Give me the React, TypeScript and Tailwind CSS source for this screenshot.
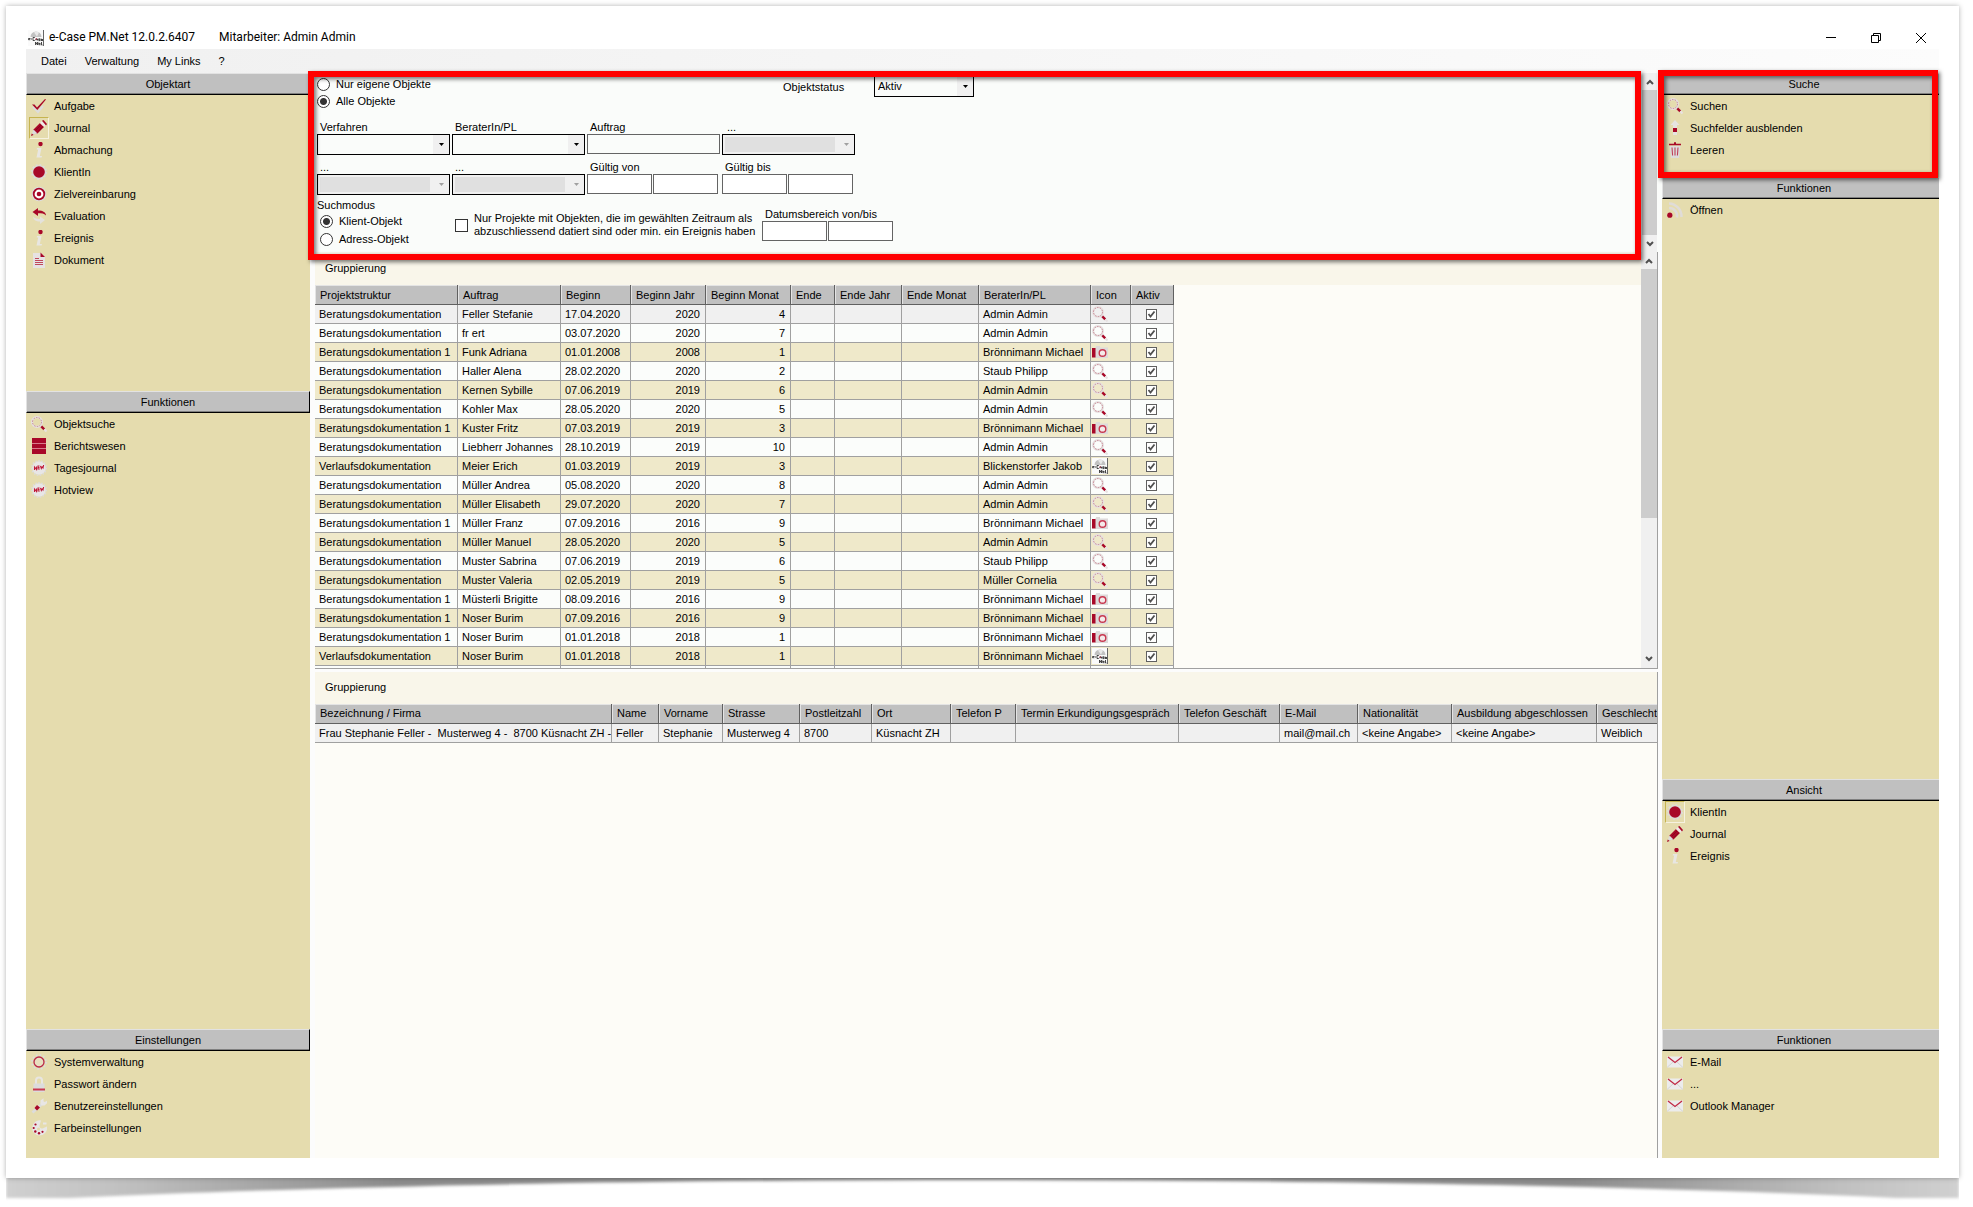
import React from "react";

type IconName =
  | "check" | "pencil" | "info" | "badge" | "target" | "reply" | "doc" | "search"
  | "books" | "new" | "gear" | "lock" | "wrench" | "palette" | "up" | "trash"
  | "feed" | "mail" | "camera" | "app";

const R = "#a80828";
const G = "#dcdcdc";

function Icon({ name }: { name: IconName }) {
  return (
    <svg width="16" height="16" viewBox="0 0 16 16" className="shrink-0" fill="none" aria-hidden="true">
      {name === "check" && (
        <>
          <path d="M2 9l5 5 5-6" stroke={G} strokeWidth="2" />
          <path d="M1 6.500h2.500L6 9.500l8-8.500 1 .6L6.300 12z" fill={R} />
        </>
      )}
      {name === "pencil" && (
        <>
          <path d="M2.500 9.500L9 3l4 4-6.500 6.500-4 .8z" fill={R} />
          <path d="M9 3l2-2 4 4-2 2z" fill="#f0e8e8" />
          <path d="M11 0.800l1.500-.8L16 4l-1 1.500z" fill={R} />
          <path d="M2.500 9.500l-1.500 4 1.500 1 4-1z" fill={G} />
          <path d="M0 16l.8-2.500 1.700 1.500z" fill={R} />
          <path d="M5 10l5-5M7 11.500l5-5" stroke="#7a0018" strokeWidth="0.600" />
        </>
      )}
      {name === "info" && (
        <>
          <circle cx="9.500" cy="2" r="2.200" fill={R} />
          <path d="M6 6h4.500L8.800 14H11l-.4 1.500H5.500L7.200 7.500H5.700z" fill="#e8e6e2" />
        </>
      )}
      {name === "badge" && (
        <>
          <circle cx="8" cy="8" r="6.800" fill={G} />
          <circle cx="8" cy="8" r="7.200" stroke={G} strokeWidth="1.600" strokeDasharray="1.800 2" />
          <circle cx="8" cy="8" r="5.800" fill={R} />
        </>
      )}
      {name === "target" && (
        <>
          <circle cx="8" cy="8" r="7.300" fill={G} />
          <circle cx="8" cy="8" r="5.300" fill="#fff" stroke={R} strokeWidth="1.800" />
          <circle cx="8" cy="8" r="2.300" fill={R} />
        </>
      )}
      {name === "reply" && (
        <>
          <path d="M7 0v2.500c5 0 8 2 8 5-2-2-4-2.200-8-2.200V8L1.500 4z" fill={R} />
          <path d="M2 8.500c0 3 3 5 7 5V16l5-4-5-3.500V11c-4 0-6-1-7-2.500z" fill="#e4e2dc" />
        </>
      )}
      {name === "doc" && (
        <>
          <path d="M2 1h8l4 4v11H2z" fill="#e6e2e2" />
          <path d="M9.500 0.500L14 5h-4.500z" fill={R} />
          <path d="M4 6.500h4M4 8.500h8M4 10.500h8M4 12.500h8" stroke="#c0485c" />
        </>
      )}
      {name === "search" && (
        <>
          <circle cx="6" cy="6" r="4.900" stroke="#e6e0e0" strokeWidth="2.200" />
          <circle cx="6" cy="6" r="4.500" stroke="#c88490" strokeDasharray="1.500 1.300" />
          <path d="M9.500 9.500l1 1" stroke="#ddd" strokeWidth="2" />
          <path d="M10.300 10.300l3 3" stroke={R} strokeWidth="2.400" />
          <path d="M13.300 13.300l2.200 2.200" stroke="#e8e2e2" strokeWidth="2.200" />
        </>
      )}
      {name === "books" && (
        <>
          <path d="M1 0h14v16H1z" fill={R} />
          <path d="M1 5.500h14M1 10.500h14" stroke="#d87a8a" />
        </>
      )}
      {name === "new" && (
        <>
          <circle cx="8" cy="8" r="6.800" fill="#e8e6e6" />
          <circle cx="8" cy="8" r="7.200" stroke={G} strokeWidth="1.500" strokeDasharray="1.500 1.500" />
          <path d="M3.500 10V7l2 2.500V6.500M8.500 6H7v3h1.800M7 7.500h1.500M9.500 5.800l.8 2.700.8-1.700.9 1.200.6-3" stroke="#c01838" strokeWidth="1.100" />
        </>
      )}
      {name === "gear" && (
        <>
          <circle cx="8" cy="8" r="7" stroke={G} strokeWidth="1.800" strokeDasharray="1.700 2" />
          <circle cx="8" cy="8" r="5" fill="#e8dfc0" stroke="#b8284a" strokeWidth="1.300" />
        </>
      )}
      {name === "lock" && (
        <>
          <path d="M5 8V4.500a3 3 0 016 0V8" stroke="#e8e6e2" strokeWidth="2" />
          <path d="M2.500 7.500h11V16h-11z" fill={G} />
          <path d="M2 12.500h12v2H2z" fill="#c83850" />
        </>
      )}
      {name === "wrench" && (
        <>
          <path d="M1.500 14.500L12 5" stroke={G} strokeWidth="2.800" />
          <path d="M9.500 6V2.500L12.500.2v3l1.300.9L16 2.800v2.400L13.500 7.500h-3z" fill="#e8e6e4" />
          <path d="M6 7l3 2.500-3 3-2.500-2.500z" fill={R} />
        </>
      )}
      {name === "palette" && (
        <>
          <path d="M10 .5L8.500 5.500a2.500 2.500 0 003 3L16 6.500a7.500 7.500 0 11-6-6z" fill="#e8e6e6" />
          <path d="M12 3.500h3.500" stroke="#e8e6e6" strokeWidth="2" />
          <g fill={R}>
            <circle cx="4.500" cy="4.500" r="1.100" />
            <circle cx="2.700" cy="8" r="1.100" />
            <circle cx="4.300" cy="11.500" r="1.200" />
            <circle cx="8" cy="13.300" r="1.200" />
            <circle cx="11.500" cy="11.800" r="1.100" />
          </g>
          <circle cx="7.500" cy="9" r="1.500" fill="#e5dcae" />
        </>
      )}
      {name === "up" && (
        <>
          <path d="M8 0l4.500 5H10v10H6V5H3.500z" fill="#e6e4e0" />
          <path d="M6 8h4v4H6z" fill={R} />
        </>
      )}
      {name === "trash" && (
        <>
          <path d="M2.500 4h11L12 16H4z" fill={G} />
          <path d="M2 2.500h12M7 1h2" stroke={R} strokeWidth="1.600" />
          <path d="M5 5.500l.6 8M8 5.500v8M11 5.500l-.6 8" stroke="#c04058" strokeWidth="1.100" />
        </>
      )}
      {name === "feed" && (
        <>
          <path d="M2 6a8 8 0 018 9.500M2 1.500A13 13 0 0114.500 15" stroke="#e0dcd8" strokeWidth="2.500" />
          <circle cx="2.800" cy="13.200" r="2.600" fill={R} />
        </>
      )}
      {name === "mail" && (
        <>
          <path d="M0 2.500h16v11H0z" fill="#ececec" />
          <path d="M0 13.500L6 8M16 13.500L10 8" stroke="#d4d4d4" />
          <path d="M1 3l7 5.500L15 3" stroke="#c02844" strokeWidth="1.300" />
        </>
      )}
      {name === "camera" && (
        <>
          <path d="M4 2h4v2H4zM3 3.500h13V14H3z" fill="#dedada" />
          <path d="M0 4h3.500v9.500H0z" fill={R} />
          <circle cx="10.500" cy="9" r="3.300" fill="#f4eaea" stroke="#c83850" strokeWidth="1.400" />
        </>
      )}
      {name === "app" && (
        <>
          <path d="M0 0h16v16H0z" fill="#fafafa" />
          <path d="M2.500 7a5.500 5.500 0 0111 0z" fill="#c2c2c2" />
          <path d="M6 2.500a5 5 0 015 0l-2 4z" fill="#e8e8e8" />
          <path d="M15.500 0v16" stroke="#666" />
          <path
            d="M.5 8.500h2M.5 8.500v1.200h1.800M3 9h1M6.800 7.500H5v3h1.800M8 10.300V9h1.500v1.500M12 8.800h-1.300v.9H12v.9h-1.500M13 9.500h2M13 8.500v2h2"
            stroke="#333"
            strokeWidth="0.900"
          />
          <path d="M7.500 15v-3l2 3v-3M10.800 13.500h1.700M10.800 12.500v2.200h1.700M13.500 12v3h1" stroke="#333" strokeWidth="0.900" />
          <path d="M7.500 9h1.500" stroke={R} />
        </>
      )}
    </svg>
  );
}

type Entry = { icon: IconName; label: string; active?: boolean };

function Section({ title, items, className, clipped }: { title: string; items: Entry[]; className: string; clipped?: boolean }) {
  return (
    <section className={`flex flex-col overflow-hidden ${className}`}>
      <h2
        className={`flex h-[22px] shrink-0 items-center justify-center border-t border-l border-b border-t-[#e2e2e2] border-l-[#e2e2e2] border-b-black bg-[#c0c0c0] shadow-[inset_0_-1px_0_#808080] ${
          clipped ? "pl-[6px]" : "border-r border-r-black"
        }`}
      >
        {title}
      </h2>
      <ul>
        {items.map((it) => (
          <li key={it.label}>
            <button type="button" className="flex h-[22px] items-center gap-[5px] pl-[3px] text-left">
              <span
                className={`flex h-[22px] w-5 items-center justify-center border ${
                  it.active ? "border-t-[#c6b450] border-r-[#f6f2e0] border-b-[#f6f2e0] border-l-[#c6b450]" : "border-transparent"
                }`}
              >
                <Icon name={it.icon} />
              </span>
              <span>{it.label}</span>
            </button>
          </li>
        ))}
      </ul>
    </section>
  );
}

function Chevron({ up }: { up?: boolean }) {
  return (
    <button type="button" aria-label={up ? "Nach oben" : "Nach unten"} className="flex h-[17px] w-full shrink-0 items-center justify-center bg-[#f0f0f0]">
      <svg width="8" height="6" viewBox="0 0 8 6" fill="none">
        <path d={up ? "M1 5l3-3 3 3" : "M1 1l3 3 3-3"} stroke="#505050" strokeWidth="2" />
      </svg>
    </button>
  );
}

function Combo({ id, value, disabled }: { id: string; value?: string; disabled?: boolean }) {
  return (
    <div className={`relative flex h-[21px] border border-black ${disabled ? "bg-[#f0f0f0] p-[2px]" : "bg-[#fafcfa]"}`}>
      <select
        id={id}
        disabled={disabled}
        className={`w-full min-w-0 appearance-none pl-[3px] text-black opacity-100 ${disabled ? "mr-[17px] bg-[#e0e0e0]" : "bg-transparent"}`}
      >
        <option>{value ?? ""}</option>
      </select>
      <span className={`pointer-events-none absolute inset-y-0 right-0 flex w-4 items-center justify-center ${disabled ? "" : "bg-[#f0f0f0]"}`}>
        <svg width="5" height="3" viewBox="0 0 5 3">
          <path d="M0 0h5L2.500 3z" fill={disabled ? "#a0a0a0" : "#000"} />
        </svg>
      </span>
    </div>
  );
}

function Field({ id, label, children, indent }: { id: string; label: string; children: React.ReactNode; indent?: boolean }) {
  return (
    <div className="flex flex-col">
      <label htmlFor={id} className={`leading-[13px] ${indent ? "pl-[5px]" : "pl-[3px]"}`}>
        {label}
      </label>
      {children}
    </div>
  );
}

function DatePair({ id, label }: { id: string; label: string }) {
  return (
    <div className="flex gap-px">
      <input id={id} className="h-5 w-[65px] border border-[#646464] bg-white px-1" />
      <input aria-label={`${label} Ende`} className="h-5 w-[65px] border border-[#646464] bg-white px-1" />
    </div>
  );
}

function Radio({ name, label, checked, className }: { name: string; label: string; checked?: boolean; className: string }) {
  return (
    <label className={`flex items-center gap-[6px] ${className}`}>
      <input
        type="radio"
        name={name}
        defaultChecked={checked}
        className="size-[13px] appearance-none rounded-full border border-[#333] bg-white checked:bg-[radial-gradient(circle,#333_0_3px,#fff_4px)]"
      />
      {label}
    </label>
  );
}

const frame = "pointer-events-none absolute z-10 border-[6px] border-[#ff0000] drop-shadow-[2px_2px_2px_rgba(0,0,0,0.55)]";

function SearchPanel() {
  return (
    <div className="relative flex h-[179px] shrink-0 bg-[#fafcfa]">
      <form className="min-w-0 flex-1 pt-[3px] pl-[2px]">
        <div className="flex items-start">
          <div className="w-[466px]">
            <Radio name="scope" label="Nur eigene Objekte" className="h-[17px]" />
            <Radio name="scope" label="Alle Objekte" checked className="h-[17px]" />
          </div>
          <label htmlFor="status" className="w-[91px] leading-[22px]">
            Objektstatus
          </label>
          <div className="w-[100px]">
            <Combo id="status" value="Aktiv" />
          </div>
        </div>
        <div className="mt-[11px] grid w-max grid-cols-[repeat(4,133px)] gap-x-[2px] gap-y-[6px]">
          <Field id="verfahren" label="Verfahren">
            <Combo id="verfahren" />
          </Field>
          <Field id="berater" label="BeraterIn/PL">
            <Combo id="berater" />
          </Field>
          <Field id="auftrag" label="Auftrag">
            <input id="auftrag" className="h-5 border border-[#646464] bg-[#fafcfa] px-1" />
          </Field>
          <Field id="f4" label="..." indent>
            <Combo id="f4" disabled />
          </Field>
          <Field id="f5" label="...">
            <Combo id="f5" disabled />
          </Field>
          <Field id="f6" label="...">
            <Combo id="f6" disabled />
          </Field>
          <Field id="von" label="Gültig von">
            <DatePair id="von" label="Gültig von" />
          </Field>
          <Field id="bis" label="Gültig bis">
            <DatePair id="bis" label="Gültig bis" />
          </Field>
        </div>
        <div className="mt-[3px] flex items-start">
          <div className="w-[138px]">
            <div className="leading-[14px]">Suchmodus</div>
            <Radio name="mode" label="Klient-Objekt" checked className="h-[18px] pl-[3px]" />
            <Radio name="mode" label="Adress-Objekt" className="h-[18px] pl-[3px]" />
          </div>
          <label className="mt-[14px] flex w-[307px] items-center gap-[6px] leading-[13px]">
            <input type="checkbox" className="size-[13px] shrink-0 appearance-none border border-[#333] bg-white" />
            <span className="whitespace-nowrap">
              Nur Projekte mit Objekten, die im gewählten Zeitraum als
              <br />
              abzuschliessend datiert sind oder min. ein Ereignis haben
            </span>
          </label>
          <div className="mt-[10px]">
            <Field id="datum" label="Datumsbereich von/bis">
              <DatePair id="datum" label="Datumsbereich" />
            </Field>
          </div>
        </div>
      </form>
      <div className="mr-[5px] flex w-[15px] flex-col bg-[#cdcdcd]">
        <Chevron up />
        <div className="flex-1" />
        <Chevron />
      </div>
      <div className={`${frame} -top-[2px] -bottom-2 -left-[7px] right-[21px]`} />
    </div>
  );
}

const cols1: [string, string][] = [
  ["Projektstruktur", "w-[143px]"],
  ["Auftrag", "w-[103px]"],
  ["Beginn", "w-[70px]"],
  ["Beginn Jahr", "w-[75px]"],
  ["Beginn Monat", "w-[85px]"],
  ["Ende", "w-[44px]"],
  ["Ende Jahr", "w-[67px]"],
  ["Ende Monat", "w-[77px]"],
  ["BeraterIn/PL", "w-[112px]"],
  ["Icon", "w-[40px]"],
  ["Aktiv", "w-[43px]"],
];

const B = "Beratungsdokumentation";
const V = "Verlaufsdokumentation";
const rows1: [string, string, string, string, string, IconName][] = [
  [B, "Feller Stefanie", "17.04.2020", "4", "Admin Admin", "search"],
  [B, "fr ert", "03.07.2020", "7", "Admin Admin", "search"],
  [B + " 1", "Funk Adriana", "01.01.2008", "1", "Brönnimann Michael", "camera"],
  [B, "Haller Alena", "28.02.2020", "2", "Staub Philipp", "search"],
  [B, "Kernen Sybille", "07.06.2019", "6", "Admin Admin", "search"],
  [B, "Kohler Max", "28.05.2020", "5", "Admin Admin", "search"],
  [B + " 1", "Kuster Fritz", "07.03.2019", "3", "Brönnimann Michael", "camera"],
  [B, "Liebherr Johannes", "28.10.2019", "10", "Admin Admin", "search"],
  [V, "Meier Erich", "01.03.2019", "3", "Blickenstorfer Jakob", "app"],
  [B, "Müller Andrea", "05.08.2020", "8", "Admin Admin", "search"],
  [B, "Müller Elisabeth", "29.07.2020", "7", "Admin Admin", "search"],
  [B + " 1", "Müller Franz", "07.09.2016", "9", "Brönnimann Michael", "camera"],
  [B, "Müller Manuel", "28.05.2020", "5", "Admin Admin", "search"],
  [B, "Muster Sabrina", "07.06.2019", "6", "Staub Philipp", "search"],
  [B, "Muster Valeria", "02.05.2019", "5", "Müller Cornelia", "search"],
  [B + " 1", "Müsterli Brigitte", "08.09.2016", "9", "Brönnimann Michael", "camera"],
  [B + " 1", "Noser Burim", "07.09.2016", "9", "Brönnimann Michael", "camera"],
  [B + " 1", "Noser Burim", "01.01.2018", "1", "Brönnimann Michael", "camera"],
  [V, "Noser Burim", "01.01.2018", "1", "Brönnimann Michael", "app"],
];

const th = "h-5 overflow-hidden border-r border-b border-[#606060] bg-[#c0c0c0] pl-[5px] text-left font-normal whitespace-nowrap shadow-[inset_1px_1px_0_#e4e4e4]";
const td = "h-[19px] overflow-hidden border-r border-b border-[#a0a0a0] p-0 pl-1 whitespace-nowrap";
const num = "h-[19px] border-r border-b border-[#a0a0a0] p-0 pr-[5px] text-right";

function ProjectTable() {
  return (
    <table className="w-[859px] table-fixed border-separate border-spacing-0 leading-[18px]">
      <thead>
        <tr>
          {cols1.map(([c, w]) => (
            <th key={c} className={`${th} ${w}`}>
              {c}
            </th>
          ))}
        </tr>
      </thead>
      <tbody>
        {rows1.map((r, i) => (
          <tr key={i} className={i === 0 ? "bg-[#f0f0f0]" : i % 2 ? "bg-[#fbfdfb]" : "bg-[#efe9ca]"}>
            <td className={td}>{r[0]}</td>
            <td className={td}>{r[1]}</td>
            <td className={td}>{r[2]}</td>
            <td className={num}>{r[2].slice(6)}</td>
            <td className={num}>{r[3]}</td>
            <td className={td} />
            <td className={td} />
            <td className={td} />
            <td className={td}>{r[4]}</td>
            <td className="h-[19px] border-r border-b border-[#a0a0a0] p-0 pl-px">
              <Icon name={r[5]} />
            </td>
            <td className="h-[19px] border-r border-b border-[#a0a0a0] p-0 pr-px">
              <span className="relative mx-auto block size-[11px]">
                <input type="checkbox" defaultChecked aria-label="Aktiv" className="block size-[11px] appearance-none border border-[#606060] bg-white" />
                <svg width="11" height="11" viewBox="0 0 11 11" fill="none" className="pointer-events-none absolute inset-0">
                  <path d="M2.500 5l2 2.500 4-5" stroke="#505050" strokeWidth="1.800" />
                </svg>
              </span>
            </td>
          </tr>
        ))}
        <tr className="bg-[#fbfdfb]">
          {cols1.map(([c]) => (
            <td key={c} className={td} />
          ))}
        </tr>
      </tbody>
    </table>
  );
}

const cols2: [string, string, string][] = [
  ["Bezeichnung / Firma", "w-[297px]", "Frau Stephanie Feller -  Musterweg 4 -  8700 Küsnacht ZH -"],
  ["Name", "w-[47px]", "Feller"],
  ["Vorname", "w-[64px]", "Stephanie"],
  ["Strasse", "w-[77px]", "Musterweg 4"],
  ["Postleitzahl", "w-[72px]", "8700"],
  ["Ort", "w-[79px]", "Küsnacht ZH"],
  ["Telefon P", "w-[65px]", ""],
  ["Termin Erkundigungsgespräch", "w-[163px]", ""],
  ["Telefon Geschäft", "w-[101px]", ""],
  ["E-Mail", "w-[78px]", "mail@mail.ch"],
  ["Nationalität", "w-[94px]", "<keine Angabe>"],
  ["Ausbildung abgeschlossen", "w-[145px]", "<keine Angabe>"],
  ["Geschlecht", "w-[70px]", "Weiblich"],
];

function PersonTable() {
  return (
    <table className="w-[1352px] table-fixed border-separate border-spacing-0 leading-[18px]">
      <thead>
        <tr>
          {cols2.map(([c, w]) => (
            <th key={c} className={`${th} ${w}`}>
              {c}
            </th>
          ))}
        </tr>
      </thead>
      <tbody>
        <tr className="bg-[#f0f0f0]">
          {cols2.map(([c, , v]) => (
            <td key={c} className="h-[19px] overflow-hidden border-r border-b border-[#a0a0a0] p-0 pl-1 whitespace-pre">
              {v}
            </td>
          ))}
        </tr>
      </tbody>
    </table>
  );
}

export default function App() {
  return (
    <div className="flex h-screen min-h-[900px] flex-col bg-white px-[6px] pt-[6px] pr-[14px] font-['Liberation_Sans',Arial,sans-serif] text-[11px] leading-[13px] text-black">
      <div className="relative flex min-h-0 flex-1 flex-col bg-white px-5 pt-5 pb-5 shadow-[0_0_5px_rgba(0,0,0,0.3)]">
        <header className="flex h-[23px] shrink-0 items-center pl-[2px] font-['Roboto',sans-serif] text-[12px]">
          <Icon name="app" />
          <h1 className="pl-[5px] whitespace-pre">e-Case PM.Net 12.0.2.6407</h1>
          <span className="pl-6">Mitarbeiter: Admin Admin</span>
          <div className="ml-auto flex items-center gap-[35px] pr-[13px]">
            <button type="button" aria-label="Minimieren">
              <svg width="10" height="10" viewBox="0 0 10 10" fill="none" stroke="#000" className="block">
                <path d="M0 4.500h10" />
              </svg>
            </button>
            <button type="button" aria-label="Wiederherstellen">
              <svg width="10" height="10" viewBox="0 0 10 10" fill="none" stroke="#000" className="block">
                <path d="M.5 2.500h7v7h-7zM2.500 2.500v-2h7v7h-2" />
              </svg>
            </button>
            <button type="button" aria-label="Schliessen">
              <svg width="10" height="10" viewBox="0 0 10 10" fill="none" stroke="#000" className="block">
                <path d="M0 0l10 10M10 0L0 10" />
              </svg>
            </button>
          </div>
        </header>
        <nav className="flex h-6 shrink-0 items-center gap-[18px] bg-linear-to-r from-[#f0f0f0] to-[#fcfcfc] pl-[15px]">
          <button type="button">Datei</button>
          <button type="button">Verwaltung</button>
          <button type="button">My Links</button>
          <button type="button">?</button>
        </nav>
        <div className="flex min-h-0 flex-1 bg-[#fcfcfc]">
          <aside className="flex w-[284px] shrink-0 flex-col bg-[#e5dcae]">
            <Section
              title="Objektart"
              className="flex-[318_318_0px]"
              items={[
                { icon: "check", label: "Aufgabe" },
                { icon: "pencil", label: "Journal", active: true },
                { icon: "info", label: "Abmachung" },
                { icon: "badge", label: "KlientIn" },
                { icon: "target", label: "Zielvereinbarung" },
                { icon: "reply", label: "Evaluation" },
                { icon: "info", label: "Ereignis" },
                { icon: "doc", label: "Dokument" },
              ]}
            />
            <Section
              title="Funktionen"
              className="flex-[638_638_0px]"
              items={[
                { icon: "search", label: "Objektsuche" },
                { icon: "books", label: "Berichtswesen" },
                { icon: "new", label: "Tagesjournal" },
                { icon: "new", label: "Hotview" },
              ]}
            />
            <Section
              title="Einstellungen"
              className="flex-[129_129_0px]"
              items={[
                { icon: "gear", label: "Systemverwaltung" },
                { icon: "lock", label: "Passwort ändern" },
                { icon: "wrench", label: "Benutzereinstellungen" },
                { icon: "palette", label: "Farbeinstellungen" },
              ]}
            />
          </aside>
          <main className="flex min-w-0 flex-1 flex-col pl-[5px]">
            <SearchPanel />
            <section className="mr-1 flex min-h-0 flex-[416_416_0px] border-r border-b border-[#a0a0a0] bg-[#fdfcf7]">
              <div className="min-w-0 flex-1 overflow-hidden">
                <div className="flex h-[33px] items-center bg-[#f9f6ea] pl-[10px]">Gruppierung</div>
                <ProjectTable />
              </div>
              <div className="flex w-4 shrink-0 flex-col bg-[#f0f0f0]">
                <Chevron up />
                <div className="flex-[249_249_0px] bg-[#cdcdcd]" />
                <div className="flex-[132_132_0px]" />
                <Chevron />
              </div>
            </section>
            <section className="mt-[3px] mr-1 min-h-0 flex-[487_487_0px] overflow-hidden border-r border-[#a0a0a0] bg-[#fdfcf7]">
              <div className="flex h-8 items-center bg-[#f9f6ea] pl-[10px]">Gruppierung</div>
              <PersonTable />
            </section>
          </main>
          <aside className="relative flex w-[277px] shrink-0 flex-col bg-[#e5dcae]">
            <Section
              title="Suche"
              clipped
              className="flex-[104_104_0px]"
              items={[
                { icon: "search", label: "Suchen" },
                { icon: "up", label: "Suchfelder ausblenden" },
                { icon: "trash", label: "Leeren" },
              ]}
            />
            <Section title="Funktionen" clipped className="flex-[602_602_0px]" items={[{ icon: "feed", label: "Öffnen" }]} />
            <Section
              title="Ansicht"
              clipped
              className="flex-[250_250_0px]"
              items={[
                { icon: "badge", label: "KlientIn", active: true },
                { icon: "pencil", label: "Journal" },
                { icon: "info", label: "Ereignis" },
              ]}
            />
            <Section
              title="Funktionen"
              clipped
              className="flex-[129_129_0px]"
              items={[
                { icon: "mail", label: "E-Mail" },
                { icon: "mail", label: "..." },
                { icon: "mail", label: "Outlook Manager" },
              ]}
            />
            <div className={`${frame} -top-[3px] right-px -left-1 h-[108px]`} />
          </aside>
        </div>
      </div>
      <svg className="h-[29px] w-full shrink-0" viewBox="0 0 1953 29" preserveAspectRatio="none" aria-hidden="true">
        <defs>
          <linearGradient id="curl" x1="0" x2="1" y1="0" y2="0">
            <stop offset="0" stopColor="#d0d0d0" />
            <stop offset="0.060" stopColor="#c0c0c0" />
            <stop offset="0.200" stopColor="#8c8c8c" />
            <stop offset="0.500" stopColor="#8a8a8a" />
            <stop offset="0.800" stopColor="#8c8c8c" />
            <stop offset="0.940" stopColor="#c0c0c0" />
            <stop offset="1" stopColor="#d0d0d0" />
          </linearGradient>
          <filter id="soft" filterUnits="userSpaceOnUse" x="-5" y="-10" width="1963" height="39">
            <feGaussianBlur stdDeviation="1.500" />
          </filter>
        </defs>
        <path d="M0 -8H1953V20H1890C1400 -4 560 -4 63 20H0z" fill="url(#curl)" filter="url(#soft)" />
      </svg>
    </div>
  );
}
